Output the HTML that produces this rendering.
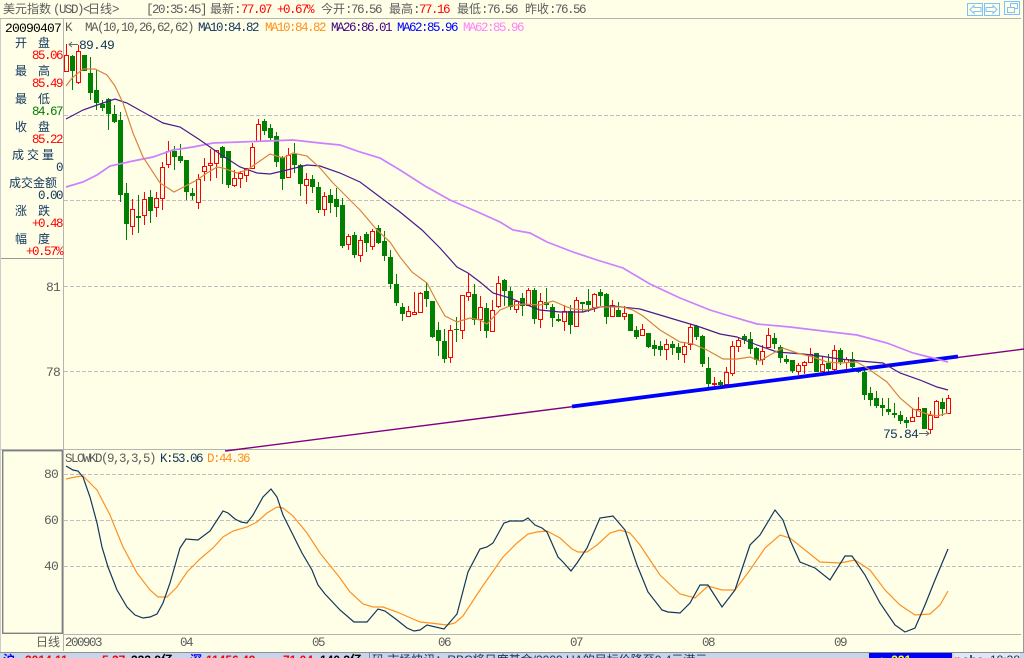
<!DOCTYPE html>
<html>
<head>
<meta charset="utf-8">
<title>美元指数</title>
<style>
html,body{margin:0;padding:0;background:#ffffe8;width:1024px;height:658px;overflow:hidden}
svg{display:block;position:absolute;left:0;top:0}
text{white-space:pre}
.m{font-family:"Liberation Mono",monospace;font-size:12.5px;letter-spacing:-1.5px}
.b{font-family:"Liberation Mono",monospace;font-size:13px;letter-spacing:-.8px}
.c{font-family:"Liberation Sans","WenQuanYi Zen Hei","Noto Sans CJK SC",sans-serif;font-size:12px}
.s{font-family:"Liberation Sans","Noto Sans CJK SC",sans-serif;font-size:12px;font-weight:bold}
.g{fill:#5c5c5c}.n{fill:#12365a}.r{fill:#ff0000}
</style>
</head>
<body>
<svg width="1024" height="658" viewBox="0 0 1024 658" xmlns="http://www.w3.org/2000/svg">
<rect width="1024" height="658" fill="#ffffe8"/>

<!-- frame lines -->
<g stroke="#b4b4b4" stroke-width="1" shape-rendering="crispEdges" fill="none">
<path d="M0 18.5H1021M0 449.5H1021M63.5 19V449M63.5 450V651M64 634.5H1021"/>
<path d="M0 258.5H63" stroke="#999"/>
<path d="M1023.5 0V652" stroke="#999"/>
<path d="M0.5 19V652" stroke="#ccc"/>
</g>
<rect x="2.7" y="450.7" width="59.6" height="182.6" fill="none" stroke="#808080" stroke-width="1.4"/>

<!-- grids -->
<g stroke="#c0c0c0" stroke-dasharray="4 2" shape-rendering="crispEdges" fill="none">
<path d="M64 115.5H1021M64 200.5H1021M64 286.5H1021M64 371.5H1021"/>
<path d="M64 474.5H1021M64 520.5H1021M64 566.5H1021"/>
</g>

<!-- candles green -->
<path shape-rendering="crispEdges" fill="none" stroke="#008000" stroke-width="1" d="M72.5 55V90M84.5 55V71M90.5 57V100M96.5 70V110M102.5 100V111M108.5 98V130M114.5 105V123M120.5 112V202M126.5 183V240M138.5 195V233M150.5 190V223M174.5 146V170M180.5 144V163M186.5 160V200M192.5 188V200M222.5 146V184M228.5 151V188M264.5 119V135M270.5 124V140M276.5 132V167M282.5 156V190M294.5 143V173M300.5 164V196M312.5 175V193M318.5 182V213M330.5 189V213M336.5 188V217M342.5 198V248M354.5 232V258M366.5 232V252M378.5 225V244M384.5 231V261M390.5 250V289M396.5 274V306M402.5 303V321M426.5 282V307M432.5 301V338M438.5 322V356M444.5 329V363M456.5 317V342M474.5 284V325M486.5 303V338M504.5 279V306M510.5 287V310M522.5 293V316M534.5 288V324M546.5 288V309M552.5 304V327M558.5 314V322M570.5 305V334M582.5 302V312M588.5 289V312M600.5 289V306M606.5 293V324M618.5 302V317M630.5 314V331M636.5 326V339M648.5 333V348M654.5 340V356M660.5 341V356M672.5 341V355M678.5 343V360M696.5 325V340M702.5 335V367M708.5 357V387M720.5 380V387M744.5 334V344M750.5 332V354M756.5 347V365M774.5 333V349M780.5 345V363M786.5 355V364M792.5 360V373M816.5 353V372M828.5 354V373M840.5 348V365M852.5 352V369M858.5 368V373M864.5 368V400M870.5 387V406M876.5 391V408M882.5 398V416M888.5 398V415M894.5 403V418M900.5 411V424M906.5 417V428M924.5 408V429M942.5 398V416"/>
<path shape-rendering="crispEdges" fill="none" stroke="#008000" stroke-width="5" d="M72.5 56V71M84.5 55V71M90.5 73V93M96.5 90V103M102.5 104V108M108.5 99V114M114.5 114V122M120.5 120V195M126.5 193V224M138.5 216V218M150.5 197V211M174.5 151V157M180.5 156V161M186.5 160V192M192.5 193V196M222.5 147V158M228.5 151V185M264.5 121V131M270.5 128V138M276.5 136V162M282.5 157V179M294.5 154V165M300.5 165V184M312.5 179V187M318.5 187V210M330.5 195V203M336.5 199V207M342.5 205V246M354.5 235V255M366.5 234V243M378.5 228V243M384.5 241V256M390.5 257V284M396.5 284V303M402.5 307V314M426.5 291V299M432.5 301V337M438.5 330V341M444.5 341V359M456.5 329V330M474.5 294V320M486.5 308V331M504.5 280V291M510.5 291V307M522.5 298V306M534.5 290V319M546.5 302V305M552.5 307V318M558.5 319V321M570.5 311V325M582.5 302V304M588.5 301V305M600.5 292V296M606.5 294V317M618.5 310V317M630.5 314V331M636.5 330V337M648.5 333V347M654.5 345V349M660.5 346V350M672.5 344V348M678.5 347V353M696.5 326V337M702.5 336V364M708.5 368V384M720.5 382V385M744.5 336V340M750.5 339V349M756.5 348V360M774.5 338V344M780.5 347V358M786.5 359V362M792.5 360V371M816.5 353V372M828.5 363V369M840.5 350V362M852.5 359V367M858.5 369V372M864.5 372V395M870.5 393V400M876.5 398V406M882.5 405V408M888.5 409V412M894.5 413V415M900.5 415V421M906.5 420V423M924.5 408V429M942.5 402V409"/>

<!-- candles red wicks -->
<path shape-rendering="crispEdges" fill="none" stroke="#ff0000" stroke-width="1" d="M66.5 44V55M78.5 45V51M78.5 82V84M132.5 199V209M132.5 226V235M144.5 192V199M144.5 215V225M156.5 192V198M156.5 207V217M162.5 162V167M162.5 198V210M168.5 141V151M168.5 164V168M198.5 174V179M198.5 202V209M204.5 158V166M204.5 171V181M210.5 149V163M210.5 165V181M216.5 163V178M234.5 170V178M234.5 185V187M240.5 171V173M240.5 178V188M246.5 175V182M252.5 143V147M258.5 119V124M288.5 148V155M306.5 173V179M306.5 185V204M324.5 192V196M324.5 209V216M348.5 234V236M348.5 244V250M360.5 236V240M360.5 255V262M372.5 229V231M372.5 246V250M408.5 306V311M414.5 292V312M414.5 314V315M420.5 292V293M420.5 312V313M450.5 325V330M450.5 357V363M462.5 330V339M468.5 273V292M468.5 296V301M480.5 296V307M480.5 319V331M492.5 300V310M498.5 276V283M498.5 306V308M516.5 300V301M516.5 309V313M528.5 288V290M540.5 293V301M540.5 319V328M564.5 305V311M564.5 321V331M576.5 297V300M594.5 293V294M594.5 307V312M612.5 300V305M624.5 306V313M624.5 316V320M642.5 324V329M666.5 339V344M666.5 349V360M684.5 342V346M684.5 354V363M690.5 324V327M690.5 344V350M714.5 377V383M714.5 384V387M726.5 367V372M726.5 384V385M732.5 341V346M732.5 373V376M738.5 337V340M738.5 346V352M762.5 345V351M762.5 359V365M768.5 328V335M768.5 347V348M798.5 363V365M798.5 371V375M804.5 361V362M804.5 365V374M810.5 348V354M810.5 362V363M822.5 356V364M822.5 371V372M834.5 345V350M834.5 369V372M846.5 357V359M846.5 362V369M912.5 408V417M918.5 397V409M930.5 411V415M930.5 429V434M936.5 400V401M936.5 417V418M948.5 395V398"/>
<!-- candles red bodies -->
<path shape-rendering="crispEdges" fill="#ffffe8" stroke="#ff0000" stroke-width="1" d="M64.500 55.500h4V71.500h-4zM76.500 51.500h4V82.500h-4zM130.500 209.500h4V226.500h-4zM142.500 199.500h4V215.500h-4zM154.500 198.500h4V207.500h-4zM160.500 167.500h4V198.500h-4zM166.500 151.500h4V164.500h-4zM196.500 179.500h4V202.500h-4zM202.500 166.500h4V171.500h-4zM208.500 163.500h4V165.500h-4zM214.500 150.500h4V163.500h-4zM232.500 178.500h4V185.500h-4zM238.500 173.500h4V178.500h-4zM244.500 168.500h4V175.500h-4zM250.500 147.500h4V168.500h-4zM256.500 124.500h4V141.500h-4zM286.500 155.500h4V177.500h-4zM304.500 179.500h4V185.500h-4zM322.500 196.500h4V209.500h-4zM346.500 236.500h4V244.500h-4zM358.500 240.500h4V255.500h-4zM370.500 231.500h4V246.500h-4zM406.500 311.500h4V316.500h-4zM412.500 312.500h4V314.500h-4zM418.500 293.500h4V312.500h-4zM448.500 330.500h4V357.500h-4zM460.500 295.500h4V330.500h-4zM466.500 292.500h4V296.500h-4zM478.500 307.500h4V319.500h-4zM490.500 310.500h4V331.500h-4zM496.500 283.500h4V306.500h-4zM514.500 301.500h4V309.500h-4zM526.500 290.500h4V305.500h-4zM538.500 301.500h4V319.500h-4zM562.500 311.500h4V321.500h-4zM574.500 300.500h4V326.500h-4zM592.500 294.500h4V307.500h-4zM610.500 305.500h4V316.500h-4zM622.500 313.500h4V316.500h-4zM640.500 329.500h4V335.500h-4zM664.500 344.500h4V349.500h-4zM682.500 346.500h4V354.500h-4zM688.500 327.500h4V344.500h-4zM712.500 383.500h4V384.500h-4zM724.500 372.500h4V384.500h-4zM730.500 346.500h4V373.500h-4zM736.500 340.500h4V346.500h-4zM760.500 351.500h4V359.500h-4zM766.500 335.500h4V347.500h-4zM796.500 365.500h4V371.500h-4zM802.500 362.500h4V365.500h-4zM808.500 354.500h4V362.500h-4zM820.500 364.500h4V371.500h-4zM832.500 350.500h4V369.500h-4zM844.500 359.500h4V362.500h-4zM910.500 417.500h4V421.500h-4zM916.500 409.500h4V416.500h-4zM928.500 415.500h4V429.500h-4zM934.500 401.500h4V417.500h-4zM946.500 398.500h4V413.500h-4z"/>

<!-- trendlines -->
<path d="M225 451L1024 349" stroke="#800080" stroke-width="1.4" fill="none"/>
<path d="M572 406.500L958 356.500" stroke="#0000ff" stroke-width="3.800" fill="none"/>

<!-- MA62 -->
<polyline fill="none" stroke="#cc7fff" stroke-width="1.700" points="66,187 83,182 97,175 110,166 133,161 153,157 173,150 193,147 213,143 240,142 267,141 293,140 320,143 340,145 360,152 380,158 400,170 425,186 450,200 480,213 500,222 513,230 530,233 547,242 573,252 597,260 623,268 650,284 680,298 710,310 723,314 757,324 790,327 823,331 857,335 887,343 913,353 933,358 948,362"/>
<!-- MA26 -->
<polyline fill="none" stroke="#4a1a8c" stroke-width="1.200" points="66,119 83,110 100,104 115,99 127,103 143,112 163,123 180,127 200,140 220,154 240,167 257,173 270,174 287,170 307,165 320,166 340,173 360,182 380,197 400,212 422,230 440,248 457,267 468,273 480,282 493,293 510,298 527,305 540,310 560,312 583,312 600,307 613,306 640,309 660,315 680,321 697,326 720,334 737,337 757,345 777,352 803,354 820,356 840,359 860,361 883,363 900,373 920,380 937,387 948,390"/>
<!-- MA10 -->
<polyline fill="none" stroke="#d8843c" stroke-width="1.200" points="66,86 72,78 83,69 95,69 107,75 115,86 123,103 133,133 143,157 160,183 174,192 197,180 207,173 217,167 223,168 237,173 247,170 257,163 270,154 283,158 293,153 307,156 320,168 333,183 340,190 360,210 377,230 390,242 400,257 412,272 427,283 437,302 445,316 457,322 470,318 480,320 487,324 500,310 510,306 523,304 540,305 553,301 567,307 573,309 587,310 597,307 610,307 623,307 633,310 643,316 660,330 680,342 693,344 707,350 723,359 737,359 750,357 760,361 770,355 783,348 797,353 813,357 827,362 840,363 857,362 870,370 887,382 900,398 913,409 927,414 937,416 948,413"/>

<!-- KD -->
<polyline fill="none" stroke="#ff9020" stroke-width="1.200" points="66,479 75,477 83,476 97,490 110,515 123,547 137,573 150,590 158,597 167,597 177,587 187,572 200,559 213,548 223,537 233,531 247,527 257,522 267,513 277,507 283,508 293,516 307,533 320,553 340,578 350,592 363,604 373,607 383,607 397,612 420,622 430,623 447,625 455,623 463,616 482,587 503,557 517,543 528,534 537,532 547,531 560,538 572,549 578,552 587,552 597,545 610,533 620,530 630,533 640,545 660,575 680,594 695,598 708,586 722,590 735,590 750,570 765,548 780,535 790,538 805,550 820,562 840,563 855,560 870,570 885,590 900,605 915,615 930,614 940,605 948,591"/>
<polyline fill="none" stroke="#12365a" stroke-width="1.200" points="66,466 73,470 78,471 83,477 90,497 97,523 102,547 108,567 117,590 127,607 135,615 143,618 150,617 157,614 163,603 170,583 180,548 186,539 198,540 210,531 223,511 228,513 235,519 241,522 247,523 253,515 263,497 271,489 277,497 283,515 293,535 302,553 312,570 318,585 325,594 340,610 354,622 367,622 378,609 385,611 397,620 407,628 414,631 420,630 427,625 444,629 457,614 468,572 480,549 487,547 493,543 504,523 510,521 523,521 528,518 535,525 542,528 547,532 558,557 563,562 571,571 577,563 587,548 600,518 613,516 625,530 637,565 648,592 662,610 668,612 680,613 690,603 700,585 708,585 722,607 735,590 750,545 760,535 775,510 783,520 790,540 800,562 815,568 830,580 845,556 852,556 865,575 880,603 895,625 905,632 915,628 925,605 935,580 948,549"/>

<!-- title bar -->
<text class="c g" x="3" y="13">美元指数</text>
<text class="m g" x="53" y="13">(USD)&lt;</text>
<text class="c g" x="88" y="13">日线</text>
<text class="m g" x="112" y="13">&gt;</text>
<text class="m g" x="146" y="13">[20:35:45]</text>
<text class="c g" x="210" y="13">最新</text>
<text class="m g" x="234" y="13">:</text>
<text class="m r" x="241" y="13">77.07</text>
<text class="m r" x="277" y="13">+0.67%</text>
<text class="c g" x="321" y="13">今开</text>
<text class="m g" x="345" y="13">:76.56</text>
<text class="c g" x="389" y="13">最高</text>
<text class="m g" x="413" y="13">:</text>
<text class="m r" x="419" y="13">77.16</text>
<text class="c g" x="457" y="13">最低</text>
<text class="m g" x="481" y="13">:76.56</text>
<text class="c g" x="525" y="13">昨收</text>
<text class="m g" x="549" y="13">:76.56</text>

<!-- buttons -->
<g fill="none" stroke="#7fc0ff" stroke-width="1" shape-rendering="crispEdges">
<rect x="967.500" y="3.500" width="15" height="12" stroke-width="1.400"/>
<rect x="984.500" y="3.500" width="15" height="12" stroke-width="1.400"/>
<rect x="1004.500" y="1.500" width="15" height="13" stroke-width="1.400"/>
<path d="M970 9.500l4-4v2h7v4h-7v2z" shape-rendering="auto"/>
<path d="M997 9.500l-4-4v2h-7v4h7v2z" shape-rendering="auto"/>
<rect x="1010.500" y="3.500" width="7" height="5"/>
<rect x="1007.500" y="7.500" width="7" height="5" fill="#ffffe8"/>
</g>

<!-- main legend -->
<text class="m g" x="65" y="31">K</text>
<text class="m g" x="85" y="31">MA(10,10,26,62,62)</text>
<text class="m" fill="#12365a" x="198" y="31">MA10:84.82</text>
<text class="m" fill="#ff9020" x="265" y="31">MA10:84.82</text>
<text class="m" fill="#400080" x="331" y="31">MA26:86.01</text>
<text class="m" fill="#0000ff" x="397" y="31">MA62:85.96</text>
<text class="m" fill="#ff80ff" x="463" y="31">MA62:85.96</text>

<!-- info panel -->
<text class="b" fill="#000" x="5" y="32">20090407</text>
<g>
<text class="c n" x="15" y="47">开</text><text class="c n" x="38" y="47">盘</text>
<text class="c n" x="15" y="75">最</text><text class="c n" x="38" y="75">高</text>
<text class="c n" x="15" y="103">最</text><text class="c n" x="38" y="103">低</text>
<text class="c n" x="15" y="131">收</text><text class="c n" x="38" y="131">盘</text>
<text class="c n" x="12" y="159">成</text><text class="c n" x="27" y="159">交</text><text class="c n" x="42" y="159">量</text>
<text class="c n" x="9" y="187">成交金额</text>
<text class="c n" x="15" y="215">涨</text><text class="c n" x="38" y="215">跌</text>
<text class="c n" x="15" y="243">幅</text><text class="c n" x="38" y="243">度</text>
</g>
<text class="m r" x="32" y="59">85.06</text>
<text class="m r" x="32" y="87">85.49</text>
<text class="m" fill="#008000" x="32" y="115">84.67</text>
<text class="m r" x="32" y="143">85.22</text>
<text class="m n" x="56" y="171">0</text>
<text class="m n" x="38" y="199">0.00</text>
<text class="m r" x="32" y="227">+0.48</text>
<text class="m r" x="26" y="255">+0.57%</text>

<!-- y labels -->
<text class="b g" x="46" y="291">81</text>
<text class="b g" x="46" y="376">78</text>

<!-- annotations -->
<path d="M78 44.500H69M72 42l-3 2.500 3 2.500" stroke="#666" fill="none"/>
<text class="b n" x="79" y="49">89.49</text>
<text class="b n" x="883" y="438">75.84</text>
<path d="M919 433.500H929M926 431l3 2.500-3 2.500" stroke="#666" fill="none"/>

<!-- KD labels -->
<text class="m g" x="65" y="462">SLOWKD(9,3,3,5)</text>
<text class="m n" x="160" y="462">K:53.06</text>
<text class="m" fill="#ff9020" x="207" y="462">D:44.36</text>
<text class="b g" x="44" y="478">80</text>
<text class="b g" x="44" y="524">60</text>
<text class="b g" x="44" y="570">40</text>

<!-- x axis -->
<text class="c g" x="36" y="646">日线</text>
<text class="m g" x="65" y="646">200903</text>
<text class="m g" x="180" y="646">04</text>
<text class="m g" x="312" y="646">05</text>
<text class="m g" x="438" y="646">06</text>
<text class="m g" x="570" y="646">07</text>
<text class="m g" x="702" y="646">08</text>
<text class="m g" x="834" y="646">09</text>

<!-- status bar -->
<rect x="0" y="653" width="1024" height="5" fill="#c8d4ec"/>
<path d="M0 652.500H1024" stroke="#909090" shape-rendering="crispEdges"/>
<path d="M369.500 653V658M1000 653V658" stroke="#7f8fb0" shape-rendering="crispEdges"/>
<rect x="869" y="653" width="83" height="5" fill="#0000ff"/>
<rect x="954" y="653" width="66" height="5" fill="#dfe6f6"/>
<text class="s" fill="#0000ff" x="3" y="664">沪</text>
<text class="s r" x="25" y="664">2014.11</text>
<text class="s r" x="98" y="664">-5.27</text>
<text class="s" fill="#000" x="131" y="664">223.9亿</text>
<text class="s" fill="#0000ff" x="190" y="664">深</text>
<text class="s r" x="206" y="664">11456.49</text>
<text class="s r" x="279" y="664">-71.04</text>
<text class="s" fill="#000" x="320" y="664">140.3亿</text>
<text class="c" fill="#12365a" x="372" y="664">码 市场快讯：RBC将日度基金/2009 UA的目标价降至0.4元港元</text>
<text class="s" fill="#ffff00" x="876" y="664">▲ 331</text>
<text class="s r" x="954" y="664">n</text>
<text class="s" fill="#12365a" x="962" y="664">obo</text>
<text class="c" fill="#12365a" x="990" y="664">18:38</text>
</svg>
</body>
</html>
